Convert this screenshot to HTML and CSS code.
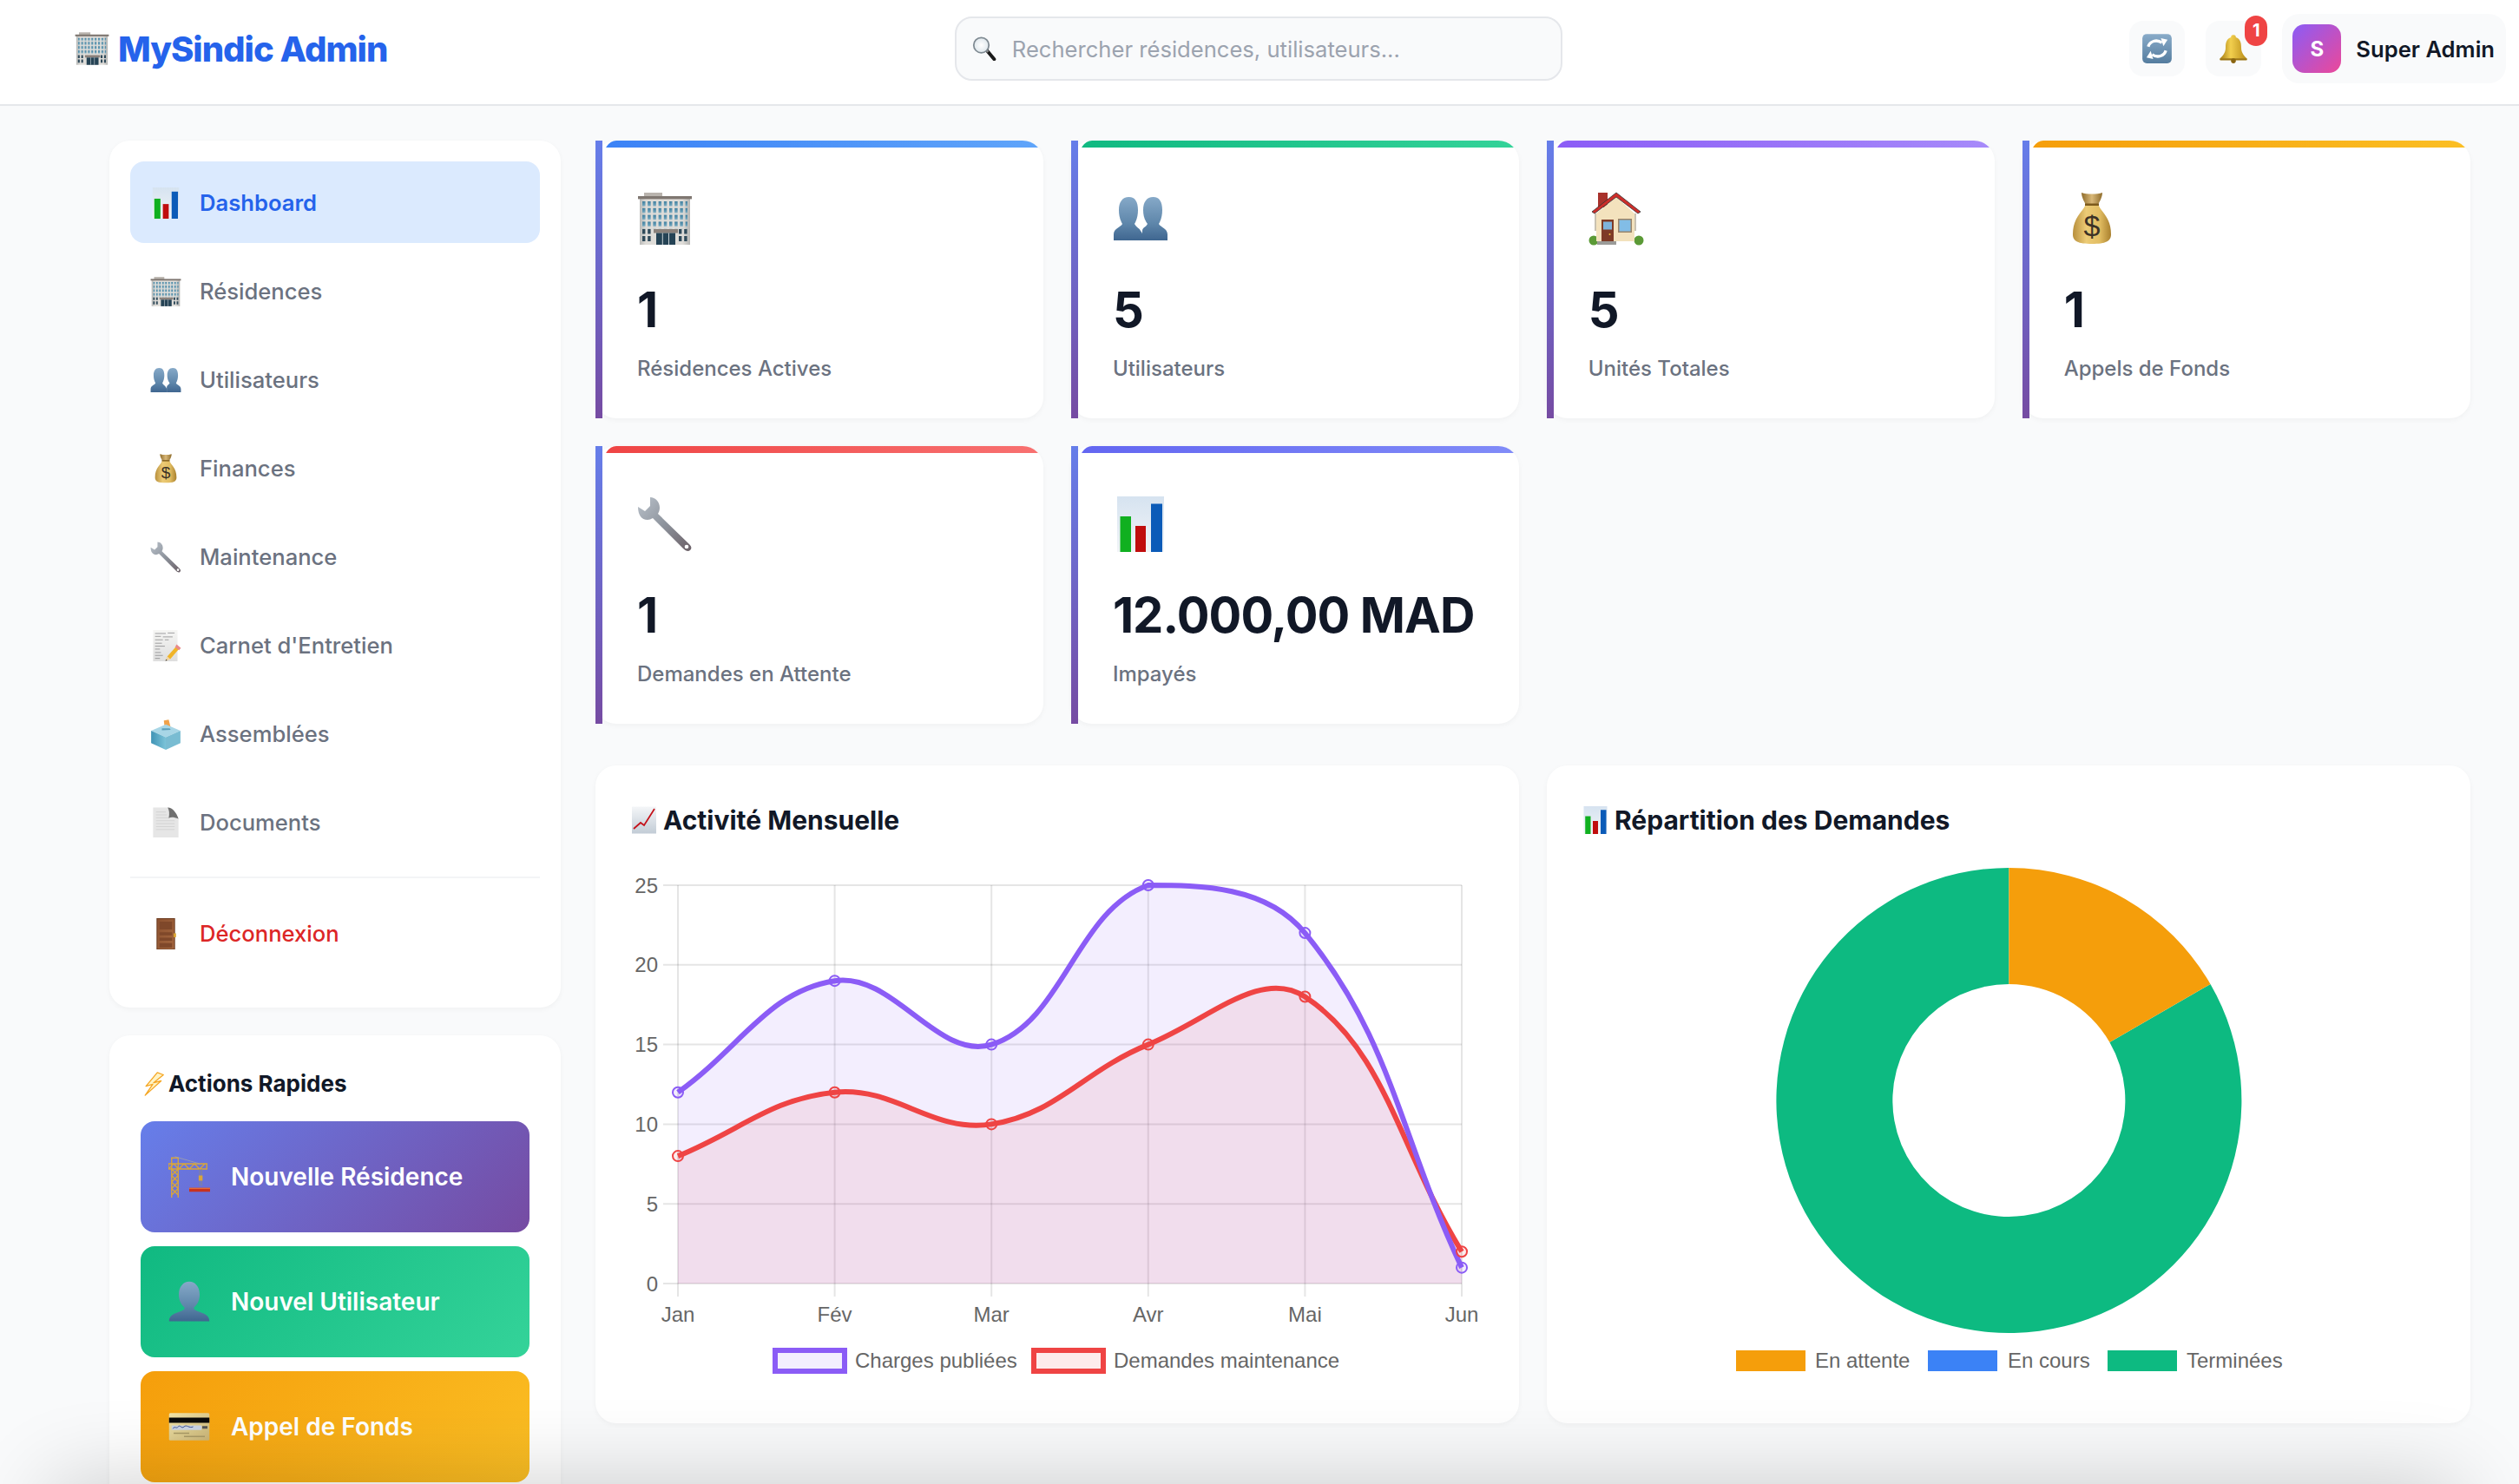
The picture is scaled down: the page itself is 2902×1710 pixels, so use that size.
FILE: index.html
```html
<!DOCTYPE html>
<html lang="fr">
<head>
<meta charset="utf-8">
<title>MySindic Admin</title>
<link rel="stylesheet" href="styles.css">
</head>
<body>
<svg class="sprite" xmlns="http://www.w3.org/2000/svg" aria-hidden="true">
  <defs>
    <linearGradient id="g-wall" x1="0" x2="1" y1="0" y2="0"><stop offset="0" stop-color="#b9bab8"/><stop offset=".12" stop-color="#dedcd8"/><stop offset=".85" stop-color="#dfddd9"/><stop offset="1" stop-color="#b5b5b3"/></linearGradient>
    <linearGradient id="g-win" x1="0" x2="0" y1="0" y2="1"><stop offset="0" stop-color="#3f7f9f"/><stop offset="1" stop-color="#75a9c0"/></linearGradient>
    <pattern id="p-win" x="6" y="12" width="6.2" height="7.8" patternUnits="userSpaceOnUse"><rect width="3.4" height="5.4" fill="url(#g-win)"/></pattern>
    <linearGradient id="g-bust" x1="0" x2="0" y1="0" y2="1"><stop offset="0" stop-color="#86a9c8"/><stop offset=".6" stop-color="#5f87ab"/><stop offset="1" stop-color="#3f6690"/></linearGradient>
    <linearGradient id="g-bag" x1="0" x2="1" y1="0" y2="0"><stop offset="0" stop-color="#b88f3c"/><stop offset=".35" stop-color="#eccb76"/><stop offset=".7" stop-color="#e2bd62"/><stop offset="1" stop-color="#a9802e"/></linearGradient>
    <linearGradient id="g-neck" x1="0" x2="1" y1="0" y2="0"><stop offset="0" stop-color="#8f6c2b"/><stop offset=".5" stop-color="#d9b878"/><stop offset="1" stop-color="#8f6c2b"/></linearGradient>
    <linearGradient id="g-steel" x1="0" x2="1" y1="0" y2="1"><stop offset="0" stop-color="#b9c1ca"/><stop offset=".5" stop-color="#8d939c"/><stop offset="1" stop-color="#6b5f66"/></linearGradient>
    <linearGradient id="g-paper" x1="0" x2="0" y1="0" y2="1"><stop offset="0" stop-color="#f6f6f4"/><stop offset="1" stop-color="#dedede"/></linearGradient>
    <linearGradient id="g-chartbg" x1="0" x2="0" y1="0" y2="1"><stop offset="0" stop-color="#d6e3f0"/><stop offset="1" stop-color="#f1f4f7"/></linearGradient>
    <linearGradient id="g-up" x1="0" x2="0" y1="0" y2="1"><stop offset="0" stop-color="#f4f6f8"/><stop offset="1" stop-color="#c2ccd6"/></linearGradient>
    <linearGradient id="g-door" x1="0" x2="1" y1="0" y2="1"><stop offset="0" stop-color="#8d5230"/><stop offset="1" stop-color="#a4673f"/></linearGradient>
    <linearGradient id="g-bell" x1="0" x2="1" y1="0" y2="0"><stop offset="0" stop-color="#a57a10"/><stop offset=".4" stop-color="#f2cf4e"/><stop offset="1" stop-color="#b78a16"/></linearGradient>
    <linearGradient id="g-card" x1="0" x2="1" y1="0" y2="1"><stop offset="0" stop-color="#f3e5a9"/><stop offset="1" stop-color="#c9b476"/></linearGradient>
    <linearGradient id="g-ref" x1="0" x2="0" y1="0" y2="1"><stop offset="0" stop-color="#89abc9"/><stop offset="1" stop-color="#557d9f"/></linearGradient>
    <linearGradient id="g-wrap" x1="0" x2="1" y1="0" y2="0"><stop offset="0" stop-color="#3f93b5"/><stop offset="1" stop-color="#7cc3d8"/></linearGradient>
    <radialGradient id="g-lens"><stop offset="0" stop-color="#ffffff"/><stop offset="1" stop-color="#dfe7ec"/></radialGradient>

    <symbol id="i-building" viewBox="0 0 64 64">
      <rect x="8" y="2" width="21" height="6" fill="#b9b4ae"/>
      <rect x="3" y="8" width="58" height="54" fill="url(#g-wall)"/>
      <rect x="1" y="6" width="62" height="3.4" fill="#7f7771"/>
      <rect x="6" y="12" width="52" height="31.2" fill="url(#p-win)"/>
      <path d="M6 44h3.4v5.4H6zM12.200 44h3.400v5.400h-3.400zM6 52h3.400v6H6zM12.200 52h3.400v6h-3.400zM48 44h3.400v5.400H48zM54.200 44h3.400v5.400h-3.400zM48 52h3.400v6H48zM54.200 52h3.400v6h-3.400z" fill="#2f4a5a"/>
      <rect x="19" y="44" width="28" height="4.500" fill="#8a817b"/>
      <rect x="22" y="48.500" width="22" height="13.500" fill="#254355"/>
      <path d="M28.800 48.500h1v13.500h-1zM36 48.500h1v13.500h-1z" fill="#c8d0d4"/>
    </symbol>

    <symbol id="i-chart" viewBox="0 0 64 64">
      <rect x="5" y="0" width="54" height="64" fill="url(#g-chartbg)"/>
      <rect x="8.500" y="23" width="12.500" height="41" fill="#10b020"/>
      <rect x="26" y="34" width="12" height="30" fill="#c00d0d"/>
      <rect x="44" y="8.500" width="13" height="55.500" fill="#0b5bb8"/>
    </symbol>

    <symbol id="i-people" viewBox="0 0 64 64">
      <g fill="url(#g-bust)">
        <path d="M34 57V46C34 42 38 42 40 38C36 33 35 27 35 22C35 13 39 7 46.500 7C54 7 57 13 57 22C57 27 56 33 53 38C55 42 63 43 63 50V57Z"/>
        <path d="M1 57V50C1 43 9 42 11 38C8 33 7 27 7 22C7 13 11 7 18.500 7C26 7 29 13 29 22C29 27 28 33 25 38C27 42 31 43 32 46C35 49 35 54 34 57Z"/>
      </g>
    </symbol>

    <symbol id="i-person" viewBox="0 0 64 64">
      <path d="M1 62C1 52 10 50 18 47C23 45 25 44 25 41C20 37 16 30 16 21C16 9 23 1 32 1C41 1 48 9 48 21C48 30 44 37 39 41C39 44 41 45 46 47C54 50 63 52 63 62Z" fill="url(#g-bust)"/>
    </symbol>

    <symbol id="i-bag" viewBox="0 0 64 64">
      <path d="M20 2C26 4 38 4 44 2C44 7 41 12 39 16H25C23 12 20 7 20 2Z" fill="url(#g-neck)"/>
      <path d="M25 15C22 24 10 30 10 50C10 58 16 61 32 61C48 61 54 58 54 50C54 30 42 24 39 15Z" fill="url(#g-bag)"/>
      <path d="M24 14.500H40V17H24Z" fill="#7d5b1c"/>
      <text x="32" y="52" text-anchor="middle" class="bag-sign">$</text>
    </symbol>

    <symbol id="i-wrench" viewBox="0 0 64 64">
      <path d="M15 1C21 1 26 6 26 13C26 16 25 18 24 20L60 55C63 58 63 60 61 62C59 64 56 63 53 60L18 25C16 26 14 27 12 27C5 27 1 21 1 12L9 17L15 11Z" fill="url(#g-steel)"/>
      <circle cx="57" cy="58" r="2.300" fill="#fff"/>
    </symbol>

    <symbol id="i-memo" viewBox="0 0 64 64">
      <rect x="6" y="0" width="50" height="64" fill="url(#g-paper)"/>
      <path d="M10 7h22M36 6h14M10 13h12M26 14h20M10 20h16M30 20h8M10 27h14M10 33h20M10 39h10M10 46h12M10 52h16M10 58h10" stroke="#77777a" stroke-width="1.200" fill="none"/>
      <path d="M58 34L38 57" stroke="#f0b429" stroke-width="8"/>
      <path d="M54 29.500L63 37L59 41.500L51 35Z" fill="#e98a8a"/>
      <path d="M34.500 54L41 60L31 63Z" fill="#f2d5a0"/>
      <path d="M31 63L33 60L35 62Z" fill="#333"/>
    </symbol>

    <symbol id="i-ballot" viewBox="0 0 64 64">
      <path d="M28 4L38 2L42 18L30 20Z" fill="#f0a24a"/>
      <path d="M32 12L62 25L32 38L2 25Z" fill="#a8d6e6"/>
      <path d="M24 20L40 20L42 23L24 24Z" fill="#5c9eb8"/>
      <path d="M2 25L32 38V64L2 50Z" fill="url(#g-wrap)"/>
      <path d="M62 25L32 38V64L62 50Z" fill="#79bcd2"/>
    </symbol>

    <symbol id="i-page" viewBox="0 0 64 64">
      <path d="M6 1H38L58 24V62H6Z" fill="#e6e6e6"/>
      <path d="M12 10H32M12 16H34M12 22H40M12 28H50M12 34H50M12 40H50M12 46H50" stroke="#cfcfcf" stroke-width="1.400"/>
      <path d="M36 1C46 1 54 12 58 24C50 20 42 20 38 22C40 14 39 6 36 1Z" fill="#6f6f6f"/>
    </symbol>

    <symbol id="i-door" viewBox="0 0 64 64">
      <rect x="13" y="0" width="38" height="64" fill="#6f3e22"/>
      <rect x="15" y="2" width="34" height="61" fill="url(#g-door)"/>
      <path d="M19 7h26v16H19zM19 29h26v6H19zM19 40h26v6H19zM19 51h26v9H19z" fill="#7f482a"/>
      <rect x="48" y="31" width="5" height="8" fill="#d9a431"/>
    </symbol>

    <symbol id="i-bolt" viewBox="0 0 64 64">
      <path d="M44 2L14 38L32 33L12 62L54 24L34 29L60 8Z" fill="#fff3c4" stroke="#f5a623" stroke-width="3" stroke-linejoin="round"/>
    </symbol>

    <symbol id="i-crane" viewBox="0 0 64 64">
      <g stroke="#d9a63a" fill="none" stroke-width="1.800">
        <path d="M5 64V3H15V64M5 20L15 30L5 40L15 50L5 60M15 20L5 30L15 40L5 50L15 60"/>
        <path d="M0 12H59V20H0ZM0 20L8 12L16 20L24 12L32 20L40 12L48 20L56 12"/>
      </g>
      <path d="M10 1L48 12" stroke="#a5a5a5" stroke-width="1"/>
      <path d="M48 20V46M51 20V46" stroke="#8b8b80" stroke-width="1"/>
      <rect x="46.500" y="30" width="6" height="8" fill="#d9a63a"/>
      <rect x="32" y="49" width="32" height="6" fill="#c8321e"/>
      <rect x="32" y="49" width="32" height="1.500" fill="#e9743c"/>
    </symbol>

    <symbol id="i-card" viewBox="0 0 64 64">
      <rect x="1" y="11" width="62" height="42" rx="2" fill="url(#g-card)"/>
      <rect x="1" y="18" width="62" height="8" fill="#0a0a0a"/>
      <rect x="5" y="30" width="46" height="7" fill="#c9d3e4"/>
      <path d="M7 35C10 30 12 36 15 32S20 36 24 32S32 35 38 32" stroke="#3a4f92" stroke-width="1.300" fill="none"/>
      <rect x="52" y="31" width="8" height="4" fill="#555"/>
      <path d="M8 42H32M24 47H56" stroke="#a99a66" stroke-width="2"/>
    </symbol>

    <symbol id="i-house" viewBox="0 0 64 64">
      <rect x="11" y="2" width="11" height="17" fill="#a8322c"/>
      <path d="M7 26H9V46H7ZM53 26H55V46H53Z" fill="#c9c2b2"/>
      <circle cx="6" cy="57" r="5.500" fill="#5b9a36"/><circle cx="58" cy="57" r="5.500" fill="#5b9a36"/>
      <path d="M9 26L32 7L53 26V58H9Z" fill="#f3e2bd"/>
      <path d="M4 24L32 2L60 24L57 26L32 7L7 26Z" fill="#cd2e2a" stroke="#333" stroke-width=".8"/>
      <rect x="15" y="33" width="14" height="26" fill="#7e3b26"/>
      <rect x="17" y="35.500" width="10" height="9" fill="#7fb4dc"/>
      <circle cx="24.500" cy="50" r="1" fill="#f0c040"/>
      <rect x="34" y="32" width="16" height="16" fill="#9a8468"/>
      <rect x="35.500" y="33.500" width="13" height="13" fill="#82bde6"/>
      <rect x="10" y="58" width="22" height="4" fill="#9b9b98"/>
    </symbol>

    <symbol id="i-up" viewBox="0 0 64 64">
      <rect x="4" y="1" width="56" height="62" fill="url(#g-up)"/>
      <path d="M8 52L24 38L32 44L56 6" stroke="#c4121a" stroke-width="3.500" fill="none"/>
    </symbol>

    <symbol id="i-search" viewBox="0 0 64 64">
      <path d="M38 36L58 60" stroke="#1a1a1a" stroke-width="9" stroke-linecap="round"/>
      <path d="M36 34L42 41" stroke="#8a8a8a" stroke-width="6"/>
      <circle cx="24" cy="23" r="20" fill="url(#g-lens)" stroke="#7f8a92" stroke-width="4"/>
    </symbol>

    <symbol id="i-refresh" viewBox="0 0 64 64">
      <rect x="2" y="2" width="60" height="60" rx="9" fill="url(#g-ref)"/>
      <path d="M14 28C17 17 31 12 42 20" stroke="#fff" stroke-width="6" fill="none"/>
      <path d="M38 12L52 12L47 27Z" fill="#fff" transform="rotate(14 45 19)"/>
      <path d="M50 36C47 47 33 52 22 44" stroke="#fff" stroke-width="6" fill="none"/>
      <path d="M26 52L12 52L17 37Z" fill="#fff" transform="rotate(14 19 45)"/>
    </symbol>

    <symbol id="i-bell" viewBox="0 0 64 64">
      <path d="M32 4C36 4 37 6 37 9C46 12 48 20 48 30C48 42 56 48 60 53H4C8 48 16 42 16 30C16 20 18 12 27 9C27 6 28 4 32 4Z" fill="url(#g-bell)"/>
      <rect x="4" y="52" width="56" height="4" rx="2" fill="#9c7410"/>
      <circle cx="32" cy="57" r="5" fill="#8a6510"/>
    </symbol>
  </defs>
</svg>

<header class="topbar">
  <a class="brand"><svg class="ico ico-40"><use href="#i-building"/></svg><span>MySindic Admin</span></a>
  <div class="search">
    <svg class="ico ico-28"><use href="#i-search"/></svg>
    <span class="search-text">Rechercher résidences, utilisateurs...</span>
  </div>
  <div class="top-actions">
    <button class="icon-btn"><svg class="ico ico-36"><use href="#i-refresh"/></svg></button>
    <button class="icon-btn"><svg class="ico ico-36"><use href="#i-bell"/></svg><span class="badge">1</span></button>
    <div class="user">
      <span class="avatar">S</span>
      <span class="user-name">Super Admin</span>
    </div>
  </div>
</header>

<div class="layout">
  <aside class="sidebar">
    <nav class="card nav">
      <a class="nav-item active"><svg class="ico nav-ico"><use href="#i-chart"/></svg>Dashboard</a>
      <a class="nav-item"><svg class="ico nav-ico"><use href="#i-building"/></svg>Résidences</a>
      <a class="nav-item"><svg class="ico nav-ico"><use href="#i-people"/></svg>Utilisateurs</a>
      <a class="nav-item"><svg class="ico nav-ico"><use href="#i-bag"/></svg>Finances</a>
      <a class="nav-item"><svg class="ico nav-ico"><use href="#i-wrench"/></svg>Maintenance</a>
      <a class="nav-item"><svg class="ico nav-ico"><use href="#i-memo"/></svg>Carnet d'Entretien</a>
      <a class="nav-item"><svg class="ico nav-ico"><use href="#i-ballot"/></svg>Assemblées</a>
      <a class="nav-item"><svg class="ico nav-ico"><use href="#i-page"/></svg>Documents</a>
      <hr class="nav-sep">
      <a class="nav-item logout"><svg class="ico nav-ico"><use href="#i-door"/></svg>Déconnexion</a>
    </nav>
    <section class="card quick">
      <h3 class="quick-title"><svg class="ico ico-28"><use href="#i-bolt"/></svg>Actions Rapides</h3>
      <a class="quick-btn q-purple"><svg class="ico ico-48"><use href="#i-crane"/></svg>Nouvelle Résidence</a>
      <a class="quick-btn q-green"><svg class="ico ico-48"><use href="#i-person"/></svg>Nouvel Utilisateur</a>
      <a class="quick-btn q-amber"><svg class="ico ico-48"><use href="#i-card"/></svg>Appel de Fonds</a>
    </section>
  </aside>

  <main class="main">
    <section class="stats">
      <article class="stat s-blue"><svg class="ico ico-64"><use href="#i-building"/></svg><div class="stat-value">1</div><div class="stat-label">Résidences Actives</div></article>
      <article class="stat s-green"><svg class="ico ico-64"><use href="#i-people"/></svg><div class="stat-value">5</div><div class="stat-label">Utilisateurs</div></article>
      <article class="stat s-violet"><svg class="ico ico-64"><use href="#i-house"/></svg><div class="stat-value">5</div><div class="stat-label">Unités Totales</div></article>
      <article class="stat s-amber"><svg class="ico ico-64"><use href="#i-bag"/></svg><div class="stat-value">1</div><div class="stat-label">Appels de Fonds</div></article>
      <article class="stat s-red"><svg class="ico ico-64"><use href="#i-wrench"/></svg><div class="stat-value">1</div><div class="stat-label">Demandes en Attente</div></article>
      <article class="stat s-indigo"><svg class="ico ico-64"><use href="#i-chart"/></svg><div class="stat-value">12.000,00 MAD</div><div class="stat-label">Impayés</div></article>
    </section>

    <section class="charts">
      <article class="card chart-card">
        <h3 class="chart-title"><svg class="ico ico-32"><use href="#i-up"/></svg>Activité Mensuelle</h3>
        <svg class="chart" viewBox="726 968 984 632">
          <g class="grid">
            <path d="M764 1020H1684M764 1111.800H1684M764 1203.600H1684M764 1295.400H1684M764 1387.200H1684M764 1479H1684"/>
            <path d="M781 1020V1494M961.600 1020V1494M1142.200 1020V1494M1322.800 1020V1494M1503.400 1020V1494M1684 1020V1494"/>
          </g>
          <g class="tick tick-y">
            <text x="758" y="1028.500">25</text><text x="758" y="1120.300">20</text><text x="758" y="1212.100">15</text><text x="758" y="1303.900">10</text><text x="758" y="1395.700">5</text><text x="758" y="1487.500">0</text>
          </g>
          <g class="tick tick-x">
            <text x="781" y="1523">Jan</text><text x="961.600" y="1523">Fév</text><text x="1142.200" y="1523">Mar</text><text x="1322.800" y="1523">Avr</text><text x="1503.400" y="1523">Mai</text><text x="1684" y="1523">Jun</text>
          </g>
          <path class="area-red" d="M781 1332.120C853.240 1302.740 887.320 1266.230 961.600 1258.680C1031.800 1251.540 1073.380 1305.890 1142.200 1295.400C1217.860 1283.860 1248.020 1234.010 1322.800 1203.600C1392.500 1175.260 1452.280 1114.740 1503.400 1148.520C1596.760 1210.210 1611.760 1324.780 1684 1442.280V1479H781Z"/>
          <path class="area-purple" d="M781 1258.680C853.240 1207.270 884.740 1141.880 961.600 1130.160C1029.220 1119.850 1079.940 1222.590 1142.200 1203.600C1224.420 1178.520 1239.440 1049.660 1322.800 1020C1383.910 1020 1459.020 1020.930 1503.400 1075.080C1603.490 1197.190 1611.760 1306.420 1684 1460.640V1479H781Z"/>
          <path class="line-red" d="M781 1332.120C853.240 1302.740 887.320 1266.230 961.600 1258.680C1031.800 1251.540 1073.380 1305.890 1142.200 1295.400C1217.860 1283.860 1248.020 1234.010 1322.800 1203.600C1392.500 1175.260 1452.280 1114.740 1503.400 1148.520C1596.760 1210.210 1611.760 1324.780 1684 1442.280"/>
          <path class="line-purple" d="M781 1258.680C853.240 1207.270 884.740 1141.880 961.600 1130.160C1029.220 1119.850 1079.940 1222.590 1142.200 1203.600C1224.420 1178.520 1239.440 1049.660 1322.800 1020C1383.910 1020 1459.020 1020.930 1503.400 1075.080C1603.490 1197.190 1611.760 1306.420 1684 1460.640"/>
          <g class="pts-red">
            <circle cx="781" cy="1332.120" r="6"/><circle cx="961.600" cy="1258.680" r="6"/><circle cx="1142.200" cy="1295.400" r="6"/><circle cx="1322.800" cy="1203.600" r="6"/><circle cx="1503.400" cy="1148.520" r="6"/><circle cx="1684" cy="1442.280" r="6"/>
          </g>
          <g class="pts-purple">
            <circle cx="781" cy="1258.680" r="6"/><circle cx="961.600" cy="1130.160" r="6"/><circle cx="1142.200" cy="1203.600" r="6"/><circle cx="1322.800" cy="1020" r="6"/><circle cx="1503.400" cy="1075.080" r="6"/><circle cx="1684" cy="1460.640" r="6"/>
          </g>
          <rect class="leg-purple" x="893" y="1556" width="80" height="24"/>
          <text class="leg-text" x="985" y="1575.500">Charges publiées</text>
          <rect class="leg-red" x="1191" y="1556" width="80" height="24"/>
          <text class="leg-text" x="1283" y="1575.500">Demandes maintenance</text>
        </svg>
      </article>
      <article class="card chart-card">
        <h3 class="chart-title"><svg class="ico ico-32"><use href="#i-chart"/></svg>Répartition des Demandes</h3>
        <svg class="chart" viewBox="1822 968 984 632">
          <path class="seg-green" d="M2546.500 1134A268 268 0 1 1 2314.400 1000V1134A134 134 0 1 0 2430.400 1201Z"/>
          <path class="seg-amber" d="M2314.400 1000A268 268 0 0 1 2546.500 1134L2430.400 1201A134 134 0 0 0 2314.400 1134Z"/>
          <rect class="seg-amber" x="2000" y="1556" width="80" height="24"/>
          <text class="leg-text" x="2091" y="1575.500">En attente</text>
          <rect class="seg-blue" x="2221" y="1556" width="80" height="24"/>
          <text class="leg-text" x="2313" y="1575.500">En cours</text>
          <rect class="seg-green" x="2428" y="1556" width="80" height="24"/>
          <text class="leg-text" x="2519" y="1575.500">Terminées</text>
        </svg>
      </article>
    </section>
  </main>
</div>
<div class="edge-shade"></div>
</body>
</html>
```
FILE: styles.css
```css
* { box-sizing: border-box; }
html, body { margin: 0; height: 100%; overflow: hidden; }
body {
  background: #f9fafb;
  color: #111827;
  font-family: Inter, "Liberation Sans", sans-serif;
  position: relative;
}
.sprite { display: block; width: 0; height: 0; }
.ico { display: block; flex: none; }
.ico-28 { width: 28px; height: 28px; }
.ico-32 { width: 32px; height: 32px; }
.ico-36 { width: 36px; height: 36px; }
.ico-40 { width: 40px; height: 40px; }
.ico-48 { width: 48px; height: 48px; }
.ico-64 { width: 64px; height: 64px; }
.bag-sign { font: 400 34px "Liberation Sans", sans-serif; fill: #3b3226; }

/* top bar */
.topbar {
  height: 122px;
  background: #fff;
  border-bottom: 2px solid #e5e7eb;
  display: flex;
  align-items: center;
  justify-content: space-between;
  padding: 0 15px 8px 86px;
}
.brand {
  display: flex;
  align-items: center;
  gap: 10px;
  color: #2563eb;
  font-size: 40px;
  font-weight: 800;
  letter-spacing: -1px;
}
.search {
  width: 700px;
  height: 74px;
  display: flex;
  align-items: center;
  gap: 18px;
  padding: 0 18px;
  background: #f9fafb;
  border: 2px solid #e5e7eb;
  border-radius: 20px;
}
.search-text { font-size: 25.6px; color: #9ca3af; }
.top-actions { display: flex; align-items: center; gap: 24px; }
.icon-btn {
  position: relative;
  width: 64px;
  height: 64px;
  padding: 0;
  border: 0;
  border-radius: 16px;
  background: #f9fafb;
  display: flex;
  align-items: center;
  justify-content: center;
}
.badge {
  position: absolute;
  top: -6px;
  right: -7px;
  width: 26px;
  height: 35px;
  border-radius: 13px;
  background: #ef4444;
  color: #fff;
  font: 700 20px/35px Inter, sans-serif;
  text-align: center;
}
.user {
  height: 80px;
  display: flex;
  align-items: center;
  gap: 17px;
  padding: 0 13px 0 12px;
  background: #f9fafb;
  border-radius: 20px;
}
.avatar {
  width: 56px;
  height: 56px;
  border-radius: 14px;
  background: linear-gradient(135deg, #8b5cf6, #ec4899);
  color: #fff;
  font-size: 24px;
  font-weight: 700;
  display: flex;
  align-items: center;
  justify-content: center;
}
.user-name { font-size: 25.6px; font-weight: 600; color: #111827; }

/* layout */
.layout {
  display: flex;
  gap: 40px;
  padding: 40px 56.5px 0 126px;
}
.sidebar { width: 520px; flex: none; display: flex; flex-direction: column; gap: 32px; }
.card {
  background: #fff;
  border-radius: 24px;
  box-shadow: 0 2px 6px rgba(0, 0, 0, 0.04);
}

/* nav */
.nav {
  display: flex;
  flex-direction: column;
  gap: 8px;
  padding: 24px 24px 39px;
}
.nav-item {
  height: 94px;
  flex: none;
  display: flex;
  align-items: center;
  gap: 21px;
  padding: 1px 24px 0 23px;
  border-radius: 16px;
  color: #6b7280;
  font-size: 25.6px;
  line-height: 32px;
  font-weight: 500;
}
.nav-ico { width: 36px; height: 36px; }
.nav-item.active { background: #dbeafe; color: #2563eb; font-weight: 600; }
.nav-item.logout { color: #dc2626; }
.nav-sep { width: 100%; height: 2px; margin: 8px 0; border: 0; background: #f3f4f6; }

/* quick actions */
.quick {
  display: flex;
  flex-direction: column;
  gap: 16px;
  padding: 39px 36px 36px;
}
.quick-title {
  margin: 0 0 10px;
  display: flex;
  align-items: center;
  gap: 4px;
  font-size: 26px;
  line-height: 34px;
  font-weight: 700;
  color: #111827;
}
.quick-btn {
  height: 128px;
  flex: none;
  display: flex;
  align-items: center;
  gap: 24px;
  padding: 0 32px;
  border-radius: 16px;
  color: #fff;
  font-size: 28px;
  font-weight: 600;
}
.q-purple { background: linear-gradient(135deg, #667eea, #764ba2); }
.q-green { background: linear-gradient(135deg, #10b981, #34d399); }
.q-amber { background: linear-gradient(135deg, #f59e0b, #fbbf24); }

/* main */
.main { flex: 1; min-width: 0; }
.stats { display: grid; grid-template-columns: repeat(4, 1fr); gap: 32px; }
.stat {
  position: relative;
  height: 320px;
  padding: 58px 40px 0;
  background: #fff;
  border-left: 8px solid #667eea;
  border-image: linear-gradient(180deg, #667eea, #764ba2) 1;
  border-radius: 24px;
  overflow: hidden;
  box-shadow: 0 2px 6px rgba(0, 0, 0, 0.04);
}
.stat::before {
  content: "";
  position: absolute;
  inset: 0 0 auto 0;
  height: 8px;
  background: var(--bar);
}
.s-blue { --bar: linear-gradient(90deg, #3b82f6, #60a5fa); }
.s-green { --bar: linear-gradient(90deg, #10b981, #34d399); }
.s-violet { --bar: linear-gradient(90deg, #8b5cf6, #a78bfa); }
.s-amber { --bar: linear-gradient(90deg, #f59e0b, #fbbf24); }
.s-red { --bar: linear-gradient(90deg, #ef4444, #f87171); }
.s-indigo { --bar: linear-gradient(90deg, #6366f1, #818cf8); }
.stat-value {
  margin-top: 39px;
  font-size: 56px;
  line-height: 68px;
  font-weight: 700;
  letter-spacing: -0.9px;
  color: #111827;
  white-space: nowrap;
}
.stat-label {
  margin-top: 18px;
  font-size: 24px;
  line-height: 32px;
  font-weight: 500;
  color: #6b7280;
}

/* charts */
.charts { display: grid; grid-template-columns: repeat(2, 1fr); gap: 32px; margin-top: 48px; }
.chart-card { height: 758px; padding: 40px; }
.chart-title {
  margin: 0;
  height: 46px;
  display: flex;
  align-items: center;
  gap: 6px;
  font-size: 30px;
  font-weight: 700;
  color: #111827;
}
.chart { display: block; width: 984px; height: 632px; }
.grid path { stroke: rgba(0, 0, 0, 0.1); stroke-width: 2; fill: none; }
.tick text, .leg-text { font: 400 24px "Liberation Sans", Arial, sans-serif; fill: #666; }
.tick-y text { text-anchor: end; }
.tick-x text { text-anchor: middle; }
.area-purple { fill: rgba(139, 92, 246, 0.1); }
.area-red { fill: rgba(239, 68, 68, 0.1); }
.line-purple, .line-red { fill: none; stroke-width: 6; }
.line-purple { stroke: #8b5cf6; }
.line-red { stroke: #ef4444; }
.pts-purple circle { fill: rgba(139, 92, 246, 0.1); stroke: #8b5cf6; stroke-width: 2; }
.pts-red circle { fill: rgba(239, 68, 68, 0.1); stroke: #ef4444; stroke-width: 2; }
.leg-purple { fill: rgba(139, 92, 246, 0.1); stroke: #8b5cf6; stroke-width: 6; }
.leg-red { fill: rgba(239, 68, 68, 0.1); stroke: #ef4444; stroke-width: 6; }
.seg-amber { fill: #f59e0b; }
.seg-blue { fill: #3b82f6; }
.seg-green { fill: #0dba81; }

/* soft shadow rising from below the fold */
.edge-shade {
  position: fixed;
  left: 60px;
  right: 70px;
  bottom: -100px;
  height: 100px;
  box-shadow: 0 0 100px rgba(0, 0, 0, 0.2);
  pointer-events: none;
}
```
